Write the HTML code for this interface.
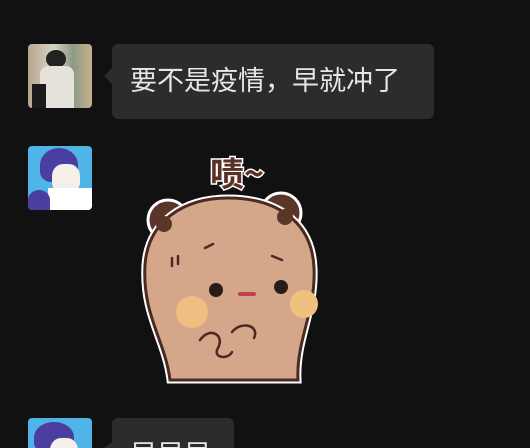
<!DOCTYPE html>
<html><head><meta charset="utf-8"><style>
html,body{margin:0;width:530px;height:448px;overflow:hidden}
body{background:#111111;position:relative;font-family:"Liberation Sans","Noto Sans CJK SC",sans-serif}
.av{position:absolute;left:28px;width:64px;height:64px;border-radius:4px;overflow:hidden}
.b{position:absolute;left:112px;background:#2c2c2c;border-radius:6px;color:#e6e6e6;font-size:27px;}
.b:before{content:"";position:absolute;left:-8px;top:24px;border:8px solid transparent;border-left:0;border-right-color:#2c2c2c}
</style></head><body>
<div class="av" style="top:44px;background:linear-gradient(90deg,#b9a58e,#d8d2c6 40%,#8a9a86 70%,#c9b08c)">
<div style="position:absolute;left:18px;top:6px;width:20px;height:18px;background:#222;border-radius:50%"></div>
<div style="position:absolute;left:12px;top:22px;width:34px;height:42px;background:#e4e2da;border-radius:8px 8px 0 0"></div>
<div style="position:absolute;left:4px;top:40px;width:14px;height:24px;background:#1a1a1a"></div>
</div>
<div class="b" style="top:44px;width:322px;height:75px;line-height:75px;text-indent:18px">要不是疫情，早就冲了</div>
<div class="av" style="top:146px;background:#4fb4e6">
<div style="position:absolute;left:12px;top:2px;width:38px;height:34px;background:#4a3fa0;border-radius:50% 50% 30% 30%"></div>
<div style="position:absolute;left:24px;top:18px;width:28px;height:30px;background:#f4efe8;border-radius:40%"></div>
<div style="position:absolute;left:20px;top:42px;width:44px;height:22px;background:#fff"></div>
<div style="position:absolute;left:0;top:44px;width:22px;height:20px;background:#4a3fa0;border-radius:50% 50% 0 0"></div>
</div>
<svg style="position:absolute;left:130px;top:140px" width="200" height="250" viewBox="130 140 200 250">
<text x="210" y="186" font-size="34" font-weight="bold" fill="#5a2f24" stroke="#fff" stroke-width="3" paint-order="stroke" font-family="Noto Sans CJK SC">啧~</text>
<circle cx="168" cy="220" r="20" fill="#5a3528" stroke="#fff" stroke-width="3"/>
<circle cx="281" cy="213" r="20" fill="#5a3528" stroke="#fff" stroke-width="3"/>
<path d="M170 380 C165 340 142 315 145 265 C148 220 185 198 228 198 C272 198 312 218 314 268 C316 312 296 340 298 380 Z" fill="#d4a68a" stroke="#fff" stroke-width="7"/>
<path d="M170 380 C165 340 142 315 145 265 C148 220 185 198 228 198 C272 198 312 218 314 268 C316 312 296 340 298 380 Z" fill="#d4a68a" stroke="#4a2a22" stroke-width="3"/>
<circle cx="164" cy="224" r="8" fill="#5a3528"/><circle cx="285" cy="217" r="8" fill="#5a3528"/>
<circle cx="192" cy="312" r="16" fill="#f0c080"/><circle cx="304" cy="304" r="14" fill="#f0c080"/>
<circle cx="216" cy="290" r="7" fill="#2a1a18"/><circle cx="281" cy="287" r="7" fill="#2a1a18"/>
<path d="M240 294 h14" stroke="#c04050" stroke-width="4" stroke-linecap="round"/>
<path d="M205 248 l8 -4 M272 256 l10 4 M172 258 v8 M178 256 v8" stroke="#4a2a22" stroke-width="2.5" fill="none" stroke-linecap="round"/>
<path d="M200 340 c10 -14 25 -5 18 8 c-6 10 10 12 14 4 M232 332 c10 -12 28 -6 22 6" stroke="#4a2a22" stroke-width="2.5" fill="none" stroke-linecap="round"/>
</svg>
<div class="av" style="top:418px;height:30px;border-radius:4px 4px 0 0;background:#4fb4e6">
<div style="position:absolute;left:6px;top:4px;width:40px;height:30px;background:#4a3fa0;border-radius:50% 50% 30% 30%"></div>
<div style="position:absolute;left:22px;top:20px;width:28px;height:30px;background:#f4efe8;border-radius:40%"></div>
</div>
<div class="b" style="top:418px;width:122px;height:30px;overflow:hidden;border-radius:6px 6px 0 0;line-height:75px;text-indent:18px">早早早</div>
<div style="position:absolute;left:104px;top:442px;border:6px solid transparent;border-left:0;border-right:8px solid #2c2c2c;border-bottom:0;height:0"></div>
</body></html>
